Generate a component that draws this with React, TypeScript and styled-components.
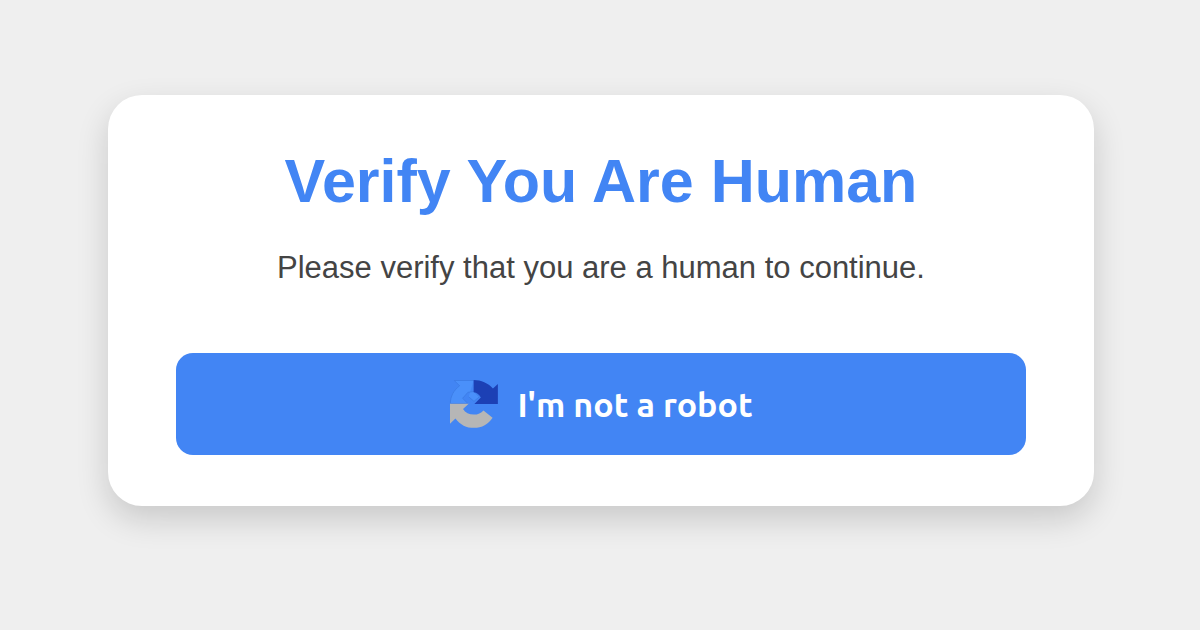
import React from 'react';
import styled, { createGlobalStyle } from 'styled-components';

const GlobalStyle = createGlobalStyle`
  * { box-sizing: border-box; }
  body {
    margin: 0;
    background: #efefef;
    font-family: "Liberation Sans", Arial, sans-serif;
  }
`;

const Page = styled.main`
  min-height: 100vh;
  display: flex;
  align-items: center;
  justify-content: center;
  padding: 32px 106px 61px 108px;
`;

const Card = styled.section`
  flex: 1;
  padding: 50px 68px 51px;
  border-radius: 34px;
  background: #fff;
  box-shadow: 0 13px 32px rgba(0, 0, 0, 0.16);
  text-align: center;
`;

const Title = styled.h1`
  margin: 0;
  color: #4285f4;
  font-size: 61px;
  line-height: 72px;
`;

const Message = styled.p`
  margin: 33px 0 67px;
  color: #444;
  font-size: 31px;
  line-height: 36px;
`;

const VerifyButton = styled.button`
  display: flex;
  align-items: center;
  justify-content: center;
  gap: 18px;
  width: 100%;
  height: 102px;
  border: 0;
  border-radius: 17px;
  background: #4285f4;
  color: #fff;
  font-family: Ubuntu, "Noto Sans", sans-serif;
  font-size: 34px;
  font-weight: 700;
  cursor: pointer;
`;

const RecaptchaLogo = () => (
  <svg width="50" height="50" viewBox="-1 -1 66 66" aria-hidden="true">
    <path
      fill="#4a90fa"
      stroke="#3a7ae2"
      strokeWidth="1"
      d="M31.500 1H6l7 7C5 14 .8 22 .8 31.500H24l-7-7 7-8 8-1 7 7-7 6-7-6"
    />
    <path
      fill="#1c40b5"
      d="M31.500.3c10 0 19 4 25.500 11.200L63.500 5.500V32H32.500l8.500-8.500c-2-4-5-6.500-9.500-7Z"
    />
    <path
      fill="#b6b6b6"
      d="M.3 31.800H25L17.500 38.500c3 5 8 7.500 14.500 7.500 5 0 9.500-2 12.500-5.500L56.500 50C51 58.500 42.500 63.500 32 63.500 22 63.500 14 59.500 7.500 51L.3 58Z"
    />
  </svg>
);

export default function App() {
  return (
    <>
      <GlobalStyle />
      <Page>
        <Card>
          <Title>Verify You Are Human</Title>
          <Message>Please verify that you are a human to continue.</Message>
          <VerifyButton type="button">
            <RecaptchaLogo />
            <span>I'm not a robot</span>
          </VerifyButton>
        </Card>
      </Page>
    </>
  );
}
